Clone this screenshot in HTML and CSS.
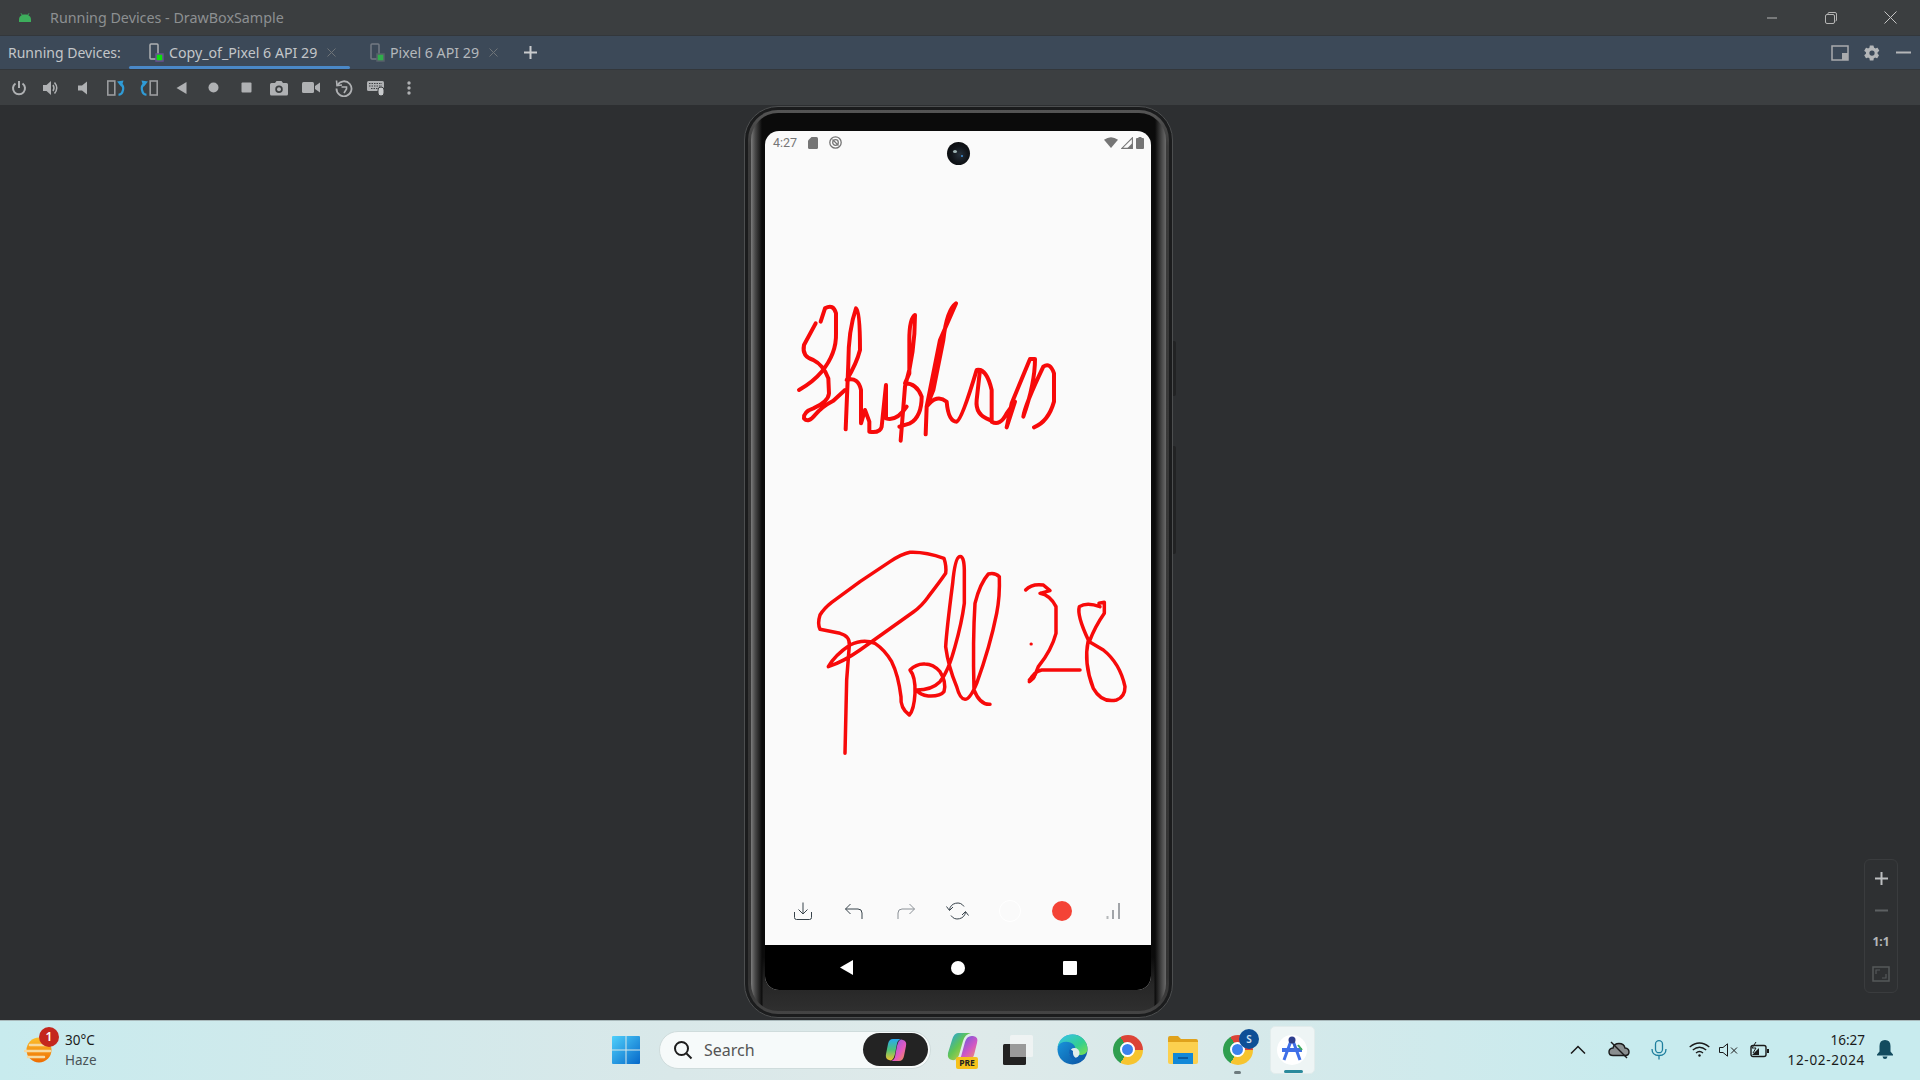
FILE: index.html
```html
<!DOCTYPE html>
<html lang="en">
<head>
<meta charset="utf-8">
<title>Running Devices - DrawBoxSample</title>
<link rel="stylesheet" href="styles.css">
</head>
<body>
<div class="titlebar">
  <svg class="android" viewBox="0 0 14 9" width="14" height="9"><path d="M1 9V6.500C1 3.500 3.500 1.500 7 1.500S13 3.500 13 6.500V9Z" fill="#3dae5c"/><path d="M3 .3 4.500 2.500M11 .3 9.500 2.500" stroke="#3dae5c" stroke-width="1"/></svg>
  <span class="title">Running Devices - DrawBoxSample</span>
  <div class="winctl">
    <svg width="12" height="12" viewBox="0 0 12 12"><path d="M1 6H11" stroke="#b5b5b5"/></svg>
    <svg width="14" height="14" viewBox="0 0 14 14" fill="none" stroke="#b5b5b5"><rect x="1.500" y="3.500" width="9" height="9" rx="1.500"/><path d="M4 3V2.500Q4 1.500 5 1.500H11Q12.500 1.500 12.500 3V9Q12.500 10 11.500 10"/></svg>
    <svg width="13" height="13" viewBox="0 0 13 13"><path d="M.5.500 12.500 12.500M12.500.500 .5 12.500" stroke="#c4c4c4"/></svg>
  </div>
</div>

<div class="tabbar">
  <span class="tablabel">Running Devices:</span>
  <div class="tab tab-active">
    <svg class="devicon" width="16" height="20" viewBox="0 0 16 20"><rect x="1" y="1" width="8" height="15" rx="1" fill="none" stroke="#afb1b3" stroke-width="1.500"/><rect x="7" y="11" width="7" height="7" fill="#0be00b" stroke="#6a4e92" stroke-width="1.500"/></svg>
    <span>Copy_of_Pixel 6 API 29</span>
    <svg class="tabx" width="9" height="9" viewBox="0 0 9 9"><path d="M.5.500 8.500 8.500M8.500.500 .5 8.500" stroke="#6f7478"/></svg>
  </div>
  <div class="tab tab-other">
    <svg class="devicon" width="16" height="20" viewBox="0 0 16 20"><rect x="1" y="1" width="8" height="15" rx="1" fill="none" stroke="#737a83" stroke-width="1.500"/><rect x="7" y="11" width="7" height="7" fill="#2fae4a" stroke="#57606a" stroke-width="1.500"/></svg>
    <span>Pixel 6 API 29</span>
    <svg class="tabx" width="9" height="9" viewBox="0 0 9 9"><path d="M.5.500 8.500 8.500M8.500.500 .5 8.500" stroke="#6f7478"/></svg>
  </div>
  <svg class="plus" width="13" height="13" viewBox="0 0 13 13"><path d="M6.500 0V13M0 6.500H13" stroke="#c9cbcd" stroke-width="2"/></svg>
  <div class="tabright">
    <svg width="18" height="16" viewBox="0 0 18 16"><rect x="1" y="1" width="16" height="14" fill="none" stroke="#a9abad" stroke-width="1.500"/><rect x="11" y="8" width="6" height="7" fill="#a9abad"/></svg>
    <svg class="gear" width="18" height="18" viewBox="0 0 24 24"><path fill="#b4b6b8" d="M19.400 13c.1-.3.100-.7.100-1s0-.7-.1-1l2.100-1.600c.2-.2.200-.4.100-.6l-2-3.500c-.1-.2-.4-.3-.6-.2l-2.500 1c-.5-.4-1.100-.7-1.700-1L14 2.400c0-.2-.2-.4-.5-.4h-4c-.2 0-.4.200-.5.400L8.600 5.100c-.6.300-1.200.6-1.700 1l-2.500-1c-.2-.1-.5 0-.6.200l-2 3.500c-.1.200-.1.400.1.600L4 11c0 .3-.1.700-.1 1s0 .7.100 1l-2.100 1.600c-.2.200-.2.400-.1.600l2 3.500c.1.200.4.300.6.200l2.500-1c.5.400 1.100.7 1.700 1l.4 2.700c0 .2.200.4.500.4h4c.2 0 .4-.2.500-.4l.4-2.700c.6-.3 1.200-.6 1.700-1l2.500 1c.2.100.5 0 .6-.2l2-3.500c.1-.2.100-.4-.1-.6ZM12 15.500a3.500 3.500 0 1 1 0-7 3.500 3.500 0 0 1 0 7Z"/></svg>
    <svg width="15" height="3" viewBox="0 0 15 3"><path d="M0 1.500H15" stroke="#b4b6b8" stroke-width="2"/></svg>
  </div>
</div>

<div class="toolbar">
  <div class="tool"><svg width="16" height="16" viewBox="0 0 16 16" fill="none" stroke="#afb1b3" stroke-width="2"><path d="M8 1V8"/><path d="M4.500 3.500A6 6 0 1 0 11.500 3.500"/></svg></div>
  <div class="tool"><svg width="18" height="16" viewBox="0 0 18 16"><path fill="#afb1b3" d="M1 5H4.500L9 1V15L4.500 11H1Z"/><path fill="none" stroke="#afb1b3" stroke-width="1.500" d="M11 5Q13 8 11 11M12.500 2.500Q17 8 12.500 13.500"/></svg></div>
  <div class="tool"><svg width="14" height="14" viewBox="0 0 14 14"><path fill="#afb1b3" d="M1 4.500H5L10 .5V13.500L5 9.500H1Z"/></svg></div>
  <div class="tool"><svg width="19" height="16" viewBox="0 0 19 16" fill="none"><rect x=".8" y="1" width="7" height="14" stroke="#9a9c9e" stroke-width="1.600"/><path d="M13 3.500Q17 5 16 10T11.500 14.500" stroke="#2f9bd6" stroke-width="2.200"/><path d="M16.500 .5 10 1.500 14.500 7Z" fill="#2f9bd6"/></svg></div>
  <div class="tool"><svg width="19" height="16" viewBox="0 0 19 16" fill="none"><rect x="11.200" y="1" width="7" height="14" stroke="#9a9c9e" stroke-width="1.600"/><path d="M6 3.500Q2 5 3 10T7.500 14.500" stroke="#2f9bd6" stroke-width="2.200"/><path d="M2.500 .5 9 1.500 4.500 7Z" fill="#2f9bd6"/></svg></div>
  <div class="tool"><svg width="11" height="12" viewBox="0 0 11 12"><path fill="#afb1b3" d="M10.500 0V12L.5 6Z"/></svg></div>
  <div class="tool"><svg width="11" height="11" viewBox="0 0 11 11"><circle cx="5.500" cy="5.500" r="5" fill="#afb1b3"/></svg></div>
  <div class="tool"><svg width="11" height="11" viewBox="0 0 11 11"><rect x=".5" y=".5" width="10" height="10" rx="1" fill="#afb1b3"/></svg></div>
  <div class="tool"><svg width="18" height="16" viewBox="0 0 18 16"><path fill="#afb1b3" fill-rule="evenodd" d="M1.500 3H5L6.500 1H11.500L13 3H16.500Q18 3 18 4.500V14Q18 15.500 16.500 15.500H1.500Q0 15.500 0 14V4.500Q0 3 1.500 3ZM9 5.500A3.700 3.700 0 1 0 9 13 3.700 3.700 0 0 0 9 5.500Z"/><circle cx="9" cy="9.300" r="2" fill="#afb1b3"/></svg></div>
  <div class="tool"><svg width="18" height="13" viewBox="0 0 18 13"><rect y="1" width="12" height="11" rx="1.500" fill="#afb1b3"/><path fill="#afb1b3" d="M13 5 18 1.500V11.500L13 8Z"/></svg></div>
  <div class="tool"><svg width="18" height="18" viewBox="0 0 18 18" fill="none" stroke="#afb1b3" stroke-width="1.800"><path d="M2.500 6A7.500 7.500 0 1 1 1.500 9.500"/><path d="M1.500 1.500 2 6.500 7 6" stroke-width="1.600"/><path d="M6.500 8H11.500V10L9 14" stroke-width="1.600"/></svg></div>
  <div class="tool"><svg width="18" height="16" viewBox="0 0 18 16"><rect y="1" width="17" height="10" rx="1.500" fill="#afb1b3"/><path d="M2 3.500H15M2 6H15M4 8.500H12" stroke="#3c3f41" stroke-dasharray="1.500 1"/><rect x="11" y="7" width="6" height="9" rx="3" fill="#c8cacc" stroke="#3c3f41"/></svg></div>
  <div class="tool"><svg width="4" height="14" viewBox="0 0 4 14" fill="#afb1b3"><circle cx="2" cy="2" r="1.700"/><circle cx="2" cy="7" r="1.700"/><circle cx="2" cy="12" r="1.700"/></svg></div>
</div>

<main class="stage">
  <div class="phone">
    <span class="sidekey sidekey-a"></span>
    <span class="sidekey sidekey-b"></span>
    <div class="rim">
      <div class="bezel">
        <div class="screen">
          <div class="statusbar">
            <span class="clock">4:27</span>
            <svg width="10" height="12" viewBox="0 0 10 12"><path fill="#757575" d="M3.500 0H8.500Q10 0 10 1.500V10.500Q10 12 8.500 12H1.500Q0 12 0 10.500V3.500Z"/></svg>
            <svg width="13" height="13" viewBox="0 0 13 13" fill="none" stroke="#757575" stroke-width="1.300"><circle cx="6.500" cy="6.500" r="5.700"/><circle cx="6.500" cy="6.500" r="2.800"/><path d="M3.500 3.500 9.500 9.500"/></svg>
            <div class="status-right">
              <svg width="14" height="11" viewBox="0 0 14 11"><path fill="#757575" d="M0 2.800Q7 -2.500 14 2.800L7 11Z"/></svg>
              <svg width="12" height="12" viewBox="0 0 12 12"><path d="M11.400 .8V11.400H.8Z" fill="none" stroke="#757575" stroke-width="1.100"/><path d="M6 11.500 11.500 6V11.500Z" fill="#757575"/></svg>
              <svg width="8" height="12" viewBox="0 0 8 12"><path fill="#757575" d="M2.500 0H5.500V1H7Q8 1 8 2V11Q8 12 7 12H1Q0 12 0 11V2Q0 1 1 1H2.500Z"/></svg>
            </div>
          </div>
          <span class="camera"><span class="glint glint-a"></span><span class="glint glint-b"></span></span>
          <div class="canvas">
            <svg class="ink" viewBox="765 156 386 721" fill="none" stroke="#f70a0a" stroke-linejoin="round" stroke-linecap="round">
              <g transform="translate(780 290) scale(.33333)" stroke-width="12">
                <path d="M107 100 72 165Q65 200 100 210 130 225 145 265L147 310Q145 335 100 355 70 365 72 385 85 400 105 375 125 350 160 332L195 300"/>
                <path d="M57 300Q100 275 125 245 170 190 168 130V70Q160 40 135 55L122 95"/>
                <path d="M197 418 205 220Q205 120 228 55 240 60 240 180 230 220 200 270 235 260 243 300V400L255 360 268 395V425Q300 430 305 410L318 285V385Q350 395 380 350"/>
                <path d="M362 452 375 290Q405 190 405 75 388 85 388 150V250L375 280Q410 280 425 320 425 380 390 400L358 410"/>
                <path d="M437 433 440 350 480 150 528 40Q500 60 490 150L460 300 440 350Q470 310 500 335 505 395 530 395 545 390 590 240 620 235 635 300V395Q660 410 680 370L705 335 680 412 695 340 750 207H765Q765 280 730 380 735 345 790 230 810 215 822 250V335Q805 395 762 412"/>
                <path d="M600 240 590 330Q585 375 630 390"/>
              </g>
              <g transform="translate(800 540) scale(.33333)" stroke-width="10.500">
                <path d="M135 640 140 420 148 315Q150 288 120 280 90 274 60 268 52 250 60 225 72 205 95 187L180 125 270 65Q305 42 330 37 375 35 432 55 440 80 437 100 420 125 385 170 365 198 340 216L180 330Q130 365 85 380 105 345 150 315 190 295 225 310 255 330 275 365 295 405 303 470 300 505 328 525 342 510 345 460 347 410 330 390 350 370 375 372 400 372 420 395 440 425 432 455 420 470 385 468 360 465 350 450 395 450 420 425 445 395 465 320 485 250 493 190V90Q492 45 478 50 465 55 458 130 440 270 437 320 445 380 470 440 480 478 495 478 510 478 530 430 570 320 590 220 600 170 598 110 585 97 565 102 540 130 525 190 518 300 522 450 540 495 570 493"/>
                <path d="M677 150Q695 130 730 135L750 152 720 160Q750 165 768 200V280Q755 330 715 380L705 405Q695 420 688 425 700 395 725 390H840"/>
                <path d="M900 200Q860 185 838 200 830 225 865 300 850 370 880 445 905 490 950 480 975 470 975 440 960 370 910 330L868 305Q885 260 913 220V187L897 190"/>
                <path d="M690 420 700 412" stroke-width="14"/>
                <path d="M693 312H694" stroke-width="9"/>
              </g>
            </svg>
          </div>
          <div class="appbar">
            <div class="appbtn"><svg width="18" height="18" viewBox="0 0 18 18" fill="none" stroke="#37424a" stroke-width="1"><path d="M9 .5V12M4.500 7.500 9 12 13.500 7.500"/><path d="M.5 10V15.500Q.5 17.500 2.500 17.500H15.500Q17.500 17.500 17.500 15.500V10"/></svg></div>
            <div class="appbtn"><svg width="18" height="16" viewBox="0 0 18 16" fill="none" stroke="#37424a" stroke-width="1"><path d="M5.500 1 .5 6 5.500 11M.5 6H13Q17 6 17 10V16" /></svg></div>
            <div class="appbtn"><svg width="18" height="16" viewBox="0 0 18 16" fill="none" stroke="#8a9096" stroke-width="1"><path d="M12.500 1 17.500 6 12.500 11M17.500 6H5Q1 6 1 10V16"/></svg></div>
            <div class="appbtn"><svg width="23" height="20" viewBox="0 0 23 20" fill="none" stroke="#37424a" stroke-width="1"><path d="M3.500 9A8 8 0 0 1 18 5.500M19.500 11A8 8 0 0 1 5 14.500"/><path d="M.5 5.500 3.500 9.500 7 6M22.500 14.500 19.500 10.500 16 14"/></svg></div>
            <div class="appbtn"><span class="swatch swatch-white"></span></div>
            <div class="appbtn"><span class="swatch swatch-red"></span></div>
            <div class="appbtn"><svg width="14" height="16" viewBox="0 0 14 16"><path d="M1.500 16V13M7 16V7M13 16V0" stroke-width="1" stroke="#4a5158"/><path d="M1.500 16V13" stroke="#b5b8ba" stroke-width="2"/></svg></div>
          </div>
          <div class="navbar">
            <svg width="13" height="15" viewBox="0 0 13 15"><path fill="#fff" d="M13 0V15L0 7.500Z"/></svg>
            <svg width="14" height="14" viewBox="0 0 14 14"><circle cx="7" cy="7" r="7" fill="#fff"/></svg>
            <svg width="14" height="14" viewBox="0 0 14 14"><rect width="14" height="14" rx="1" fill="#fff"/></svg>
          </div>
        </div>
      </div>
    </div>
  </div>

  <div class="zoompanel">
    <svg width="13" height="13" viewBox="0 0 13 13"><path d="M6.500 0V13M0 6.500H13" stroke="#bcbec0" stroke-width="2"/></svg>
    <svg width="13" height="3" viewBox="0 0 13 3"><path d="M0 1.500H13" stroke="#5d6062" stroke-width="2"/></svg>
    <span class="onetoone">1:1</span>
    <svg width="18" height="16" viewBox="0 0 18 16" fill="none"><rect x="1" y="1" width="16" height="14" stroke="#55585a" stroke-width="1.500"/><path d="M4 8V4H8M14 8V12H10" stroke="#55585a" stroke-width="1.200"/></svg>
  </div>
</main>

<footer class="taskbar">
  <div class="tb-left">
    <div class="weather-icon">
      <svg width="30" height="30" viewBox="0 0 30 30"><defs><linearGradient id="sun" x1="0" y1="0" x2="0" y2="1"><stop offset="0" stop-color="#fbc02d"/><stop offset="1" stop-color="#ef6c00"/></linearGradient></defs><circle cx="15" cy="15" r="12.500" fill="url(#sun)"/><path d="M6 10H22M1 16H26M4 22H20" stroke="#f6d9a0" stroke-width="2.500" stroke-linecap="round"/></svg>
      <span class="badge">1</span>
    </div>
    <div class="weather-text"><span class="temp">30°C</span><span class="haze">Haze</span></div>
  </div>

  <div class="tb-center">
    <svg class="winlogo" width="28" height="28" viewBox="0 0 28 28"><defs><linearGradient id="win" x1="0" y1="0" x2="1" y2="1"><stop offset="0" stop-color="#4fd0fb"/><stop offset="1" stop-color="#0668c9"/></linearGradient></defs><path fill="url(#win)" d="M0 1Q0 0 1 0H13.500V13.500H0ZM14.500 0H27Q28 0 28 1V13.500H14.500ZM0 14.500H13.500V28H1Q0 28 0 27ZM14.500 14.500H28V27Q28 28 27 28H14.500Z"/></svg>
    <div class="search">
      <svg width="20" height="20" viewBox="0 0 20 20" fill="none" stroke="#1c1c1c" stroke-width="2"><circle cx="8.500" cy="8.500" r="6.500"/><path d="M13.500 13.500 18.500 18.500"/></svg>
      <span class="search-text">Search</span>
      <div class="copilot-pill">
        <svg width="22" height="24" viewBox="0 0 22 24"><defs><linearGradient id="cpa" x1="0" y1="0" x2="0" y2="1"><stop offset="0" stop-color="#2aa9f2"/><stop offset=".5" stop-color="#4cc27a"/><stop offset="1" stop-color="#f2c22e"/></linearGradient><linearGradient id="cpb" x1="0" y1="0" x2="1" y2="1"><stop offset="0" stop-color="#7a5cf0"/><stop offset=".6" stop-color="#e45ac0"/><stop offset="1" stop-color="#f59a3c"/></linearGradient></defs><path fill="url(#cpa)" d="M8 1H16Q12 2 11.500 8L10 16Q8 24 4 22 0 21 1 16L3 6Q4 1 8 1Z"/><path fill="url(#cpb)" d="M14 23H6Q10 22 10.500 16L12 8Q14 0 18 2 22 3 21 8L19 18Q18 23 14 23Z"/></svg>
      </div>
    </div>
    <div class="tb-app">
      <svg width="32" height="36" viewBox="0 0 32 36"><defs><linearGradient id="cpc" x1="0" y1="0" x2="1" y2="1"><stop offset="0" stop-color="#1f9df0"/><stop offset=".45" stop-color="#62c554"/><stop offset="1" stop-color="#f4d03f"/></linearGradient><linearGradient id="cpd" x1="0" y1="0" x2="1" y2="1"><stop offset="0" stop-color="#3d59e8"/><stop offset=".6" stop-color="#d257c4"/><stop offset="1" stop-color="#f5a04d"/></linearGradient></defs><path fill="url(#cpc)" d="M11 1H24Q18 2 16 9L12 23Q10 29 5 28 0 27 1 21L5 8Q7 1 11 1Z"/><path fill="url(#cpd)" d="M20 29H8Q14 28 15 21L18 10Q20 3 26 4 32 5 30 11L27 23Q25 29 20 29Z"/></svg>
      <span class="pre">PRE</span>
    </div>
    <div class="tb-app">
      <svg width="30" height="30" viewBox="0 0 30 30"><rect x="0" y="9" width="23" height="21" rx="1.500" fill="#222"/><rect x="7" y="0" width="23" height="22" rx="1.500" fill="#f4f6f6" fill-opacity=".75"/><rect x="7" y="9" width="16" height="13" fill="#9a9a9a"/></svg>
    </div>
    <div class="tb-app">
      <svg width="31" height="31" viewBox="0 0 31 31"><defs><linearGradient id="edgeA" x1="0" y1="0" x2="1" y2="1"><stop offset="0" stop-color="#35c1f1"/><stop offset=".6" stop-color="#34cf90"/><stop offset="1" stop-color="#7fe04a"/></linearGradient><linearGradient id="edgeB" x1="0" y1="0" x2="1" y2="1"><stop offset="0" stop-color="#1b9de2"/><stop offset="1" stop-color="#0a4f9e"/></linearGradient></defs><circle cx="15.500" cy="15.500" r="15" fill="url(#edgeB)"/><path fill="url(#edgeA)" d="M.5 13C2 5 8 .5 15.500 .5 24 .5 30.500 7 30.500 15 30.500 20 26 21.500 21 21 17 20.500 20 15 17 11 12 6 3 7 .5 13Z"/><circle cx="17.500" cy="19" r="5" fill="#e0ecec"/><path fill="#0f62b5" d="M13 15C10 20 14 27 22 27 25 27 27 26 28 24 22 27.500 15 24 16 17Z"/></svg>
    </div>
    <div class="tb-app"><span class="chrome"><span class="chrome-eye"></span></span></div>
    <div class="tb-app">
      <svg width="30" height="28" viewBox="0 0 30 28"><path fill="#e0a21c" d="M0 2Q0 0 2 0H10L13 3H28Q30 3 30 5V8H0Z"/><path fill="#fcd04f" d="M0 6H30V26Q30 28 28 28H2Q0 28 0 26Z"/><rect x="5" y="17" width="20" height="11" fill="#1288d8"/><rect x="10" y="21" width="10" height="2" fill="#0a5a9e"/></svg>
    </div>
    <div class="tb-app running">
      <span class="chrome"><span class="chrome-eye"></span></span>
      <span class="profile">S</span>
      <span class="dot"></span>
    </div>
    <div class="tb-tile">
      <span class="as-circle">
        <svg width="26" height="30" viewBox="0 0 26 30" fill="none"><path d="M13 3 5 25M13 3 21 25" stroke="#3f6fe8" stroke-width="3"/><circle cx="13" cy="5" r="3.500" fill="#2f3f8f"/><path d="M3 15H23" stroke="#3f6fe8" stroke-width="4"/><path d="M19 10 23 15" stroke="#3dae5c" stroke-width="2"/></svg>
      </span>
      <span class="tile-bar"></span>
    </div>
  </div>

  <div class="tb-right">
    <svg width="16" height="9" viewBox="0 0 16 9" fill="none" stroke="#1a1a1a" stroke-width="1.500"><path d="M1 8.500 8 1.500 15 8.500"/></svg>
    <svg class="tray-cloud" width="22" height="18" viewBox="0 0 22 18"><path d="M5 14.500H17Q21 14.500 21 11T17 7Q16 2.500 11 2.500T5 7Q1 7.500 1 11T5 14.500Z" fill="#8a8f90" stroke="#1a1a1a" stroke-width="1.400"/><path d="M3 1 19 17" stroke="#1a1a1a" stroke-width="1.400"/></svg>
    <svg class="tray-mic" width="16" height="20" viewBox="0 0 16 20" fill="none" stroke="#1f7f9e" stroke-width="1.300"><rect x="4.500" y=".7" width="7" height="12" rx="3.500"/><path d="M1 9Q1 15.500 8 15.500T15 9M8 15.500V19.500"/></svg>
    <svg class="tray-wifi" width="21" height="15" viewBox="0 0 21 15" fill="none" stroke="#1a1a1a" stroke-width="1.300"><path d="M.7 5Q10.500 -3 20.300 5M3.800 8Q10.500 2.500 17.200 8M7 11Q10.500 8 14 11"/><circle cx="10.500" cy="13.500" r="1.200" fill="#1a1a1a" stroke="none"/></svg>
    <svg class="tray-vol" width="20" height="14" viewBox="0 0 20 14" fill="none" stroke="#1a1a1a" stroke-width="1"><path d="M.5 4.500H4L8.500 .8V13.200L4 9.500H.5Z"/><path d="M12 4.500 18 10.500M18 4.500 12 10.500"/></svg>
    <svg class="tray-bat" width="20" height="16" viewBox="0 0 20 16"><rect x="1" y="3.500" width="15" height="11" rx="2" fill="none" stroke="#1a1a1a" stroke-width="1.400"/><rect x="17" y="7" width="2" height="4" fill="#1a1a1a"/><path d="M2 13 9 6V13Z" fill="#1a1a1a"/><path d="M6 0 2 6H6L3 11" fill="none" stroke="#1a1a1a"/></svg>
    <div class="clockbox"><span>16:27</span><span class="date">12-02-2024</span></div>
    <svg width="16" height="19" viewBox="0 0 16 19"><path fill="#134b5e" d="M8 0Q13.500 0 13.500 6V11.500L16 14.500V15.500H0V14.500L2.500 11.500V6Q2.500 0 8 0ZM5.500 16.500H10.500Q10 19 8 19T5.500 16.500Z"/></svg>
  </div>
</footer>
</body>
</html>
```

FILE: styles.css
```css
* { box-sizing: border-box; }
html, body { margin: 0; height: 100%; }
body {
  width: 1920px;
  height: 1080px;
  overflow: hidden;
  display: flex;
  flex-direction: column;
  font-family: "Noto Sans", "Open Sans", sans-serif;
  background: #2d2f31;
}
svg { display: block; flex: none; }

/* IDE chrome */
.titlebar {
  height: 35px;
  flex: none;
  display: flex;
  align-items: center;
  padding-left: 18px;
  background: #3b3e40;
  color: #8d9092;
  font-size: 14.300px;
}
.title { margin-left: 18px; }
.winctl {
  margin-left: auto;
  display: flex;
  align-items: center;
  gap: 46px;
  padding-right: 23px;
}
.tabbar {
  height: 35px;
  flex: none;
  display: flex;
  align-items: center;
  padding-left: 8px;
  background: #3c4958;
  border-top: 1px solid #33373b;
  border-bottom: 1px solid #33373b;
  color: #c3c6c9;
  font-size: 14px;
}
.tablabel { width: 121px; white-space: nowrap; }
.tab {
  position: relative;
  display: flex;
  align-items: center;
  height: 33px;
  white-space: nowrap;
  font-size: 14.200px;
}
.tab-active {
  width: 221px;
  padding-left: 20px;
}
.tab-active::after {
  content: "";
  position: absolute;
  left: 0;
  right: 0;
  bottom: 0;
  height: 3px;
  border-radius: 2px;
  background: #4a88c7;
}
.tab-other { width: 160px; padding-left: 20px; color: #b4b8bc; }
.devicon { margin-right: 4px; margin-top: 1px; }
.tabx { margin-left: 10px; }
.plus { margin-left: 14px; }
.tabright {
  margin-left: auto;
  display: flex;
  align-items: center;
  gap: 14px;
  padding-right: 9px;
}
.gear { margin-right: 1px; }
.toolbar {
  height: 35px;
  flex: none;
  display: flex;
  align-items: center;
  padding-left: 2.500px;
  background: #3c3f41;
}
.tool {
  width: 32.500px;
  display: flex;
  justify-content: center;
  align-items: center;
}

/* Device stage */
.stage {
  position: relative;
  flex: 1;
  min-height: 0;
  display: flex;
  align-items: center;
  justify-content: center;
  padding-right: 3px;
  background: #2d2f31;
}
.phone {
  position: relative;
  width: 429px;
  height: 912px;
  margin-bottom: 1px;
  padding: 3px;
  border: 1px solid #4c4e4f;
  border-radius: 34px;
  background: #1b1c1d;
}
.sidekey {
  position: absolute;
  right: -4px;
  width: 3px;
  background: #222324;
  border-radius: 0 2px 2px 0;
}
.sidekey-a { top: 234px; height: 55px; }
.sidekey-b { top: 339px; height: 108px; }
.rim {
  height: 100%;
  padding: 3px;
  border-radius: 30px;
  background: linear-gradient(#555, #3a3a3a 4%, #333 96%, #444);
}
.bezel {
  height: 100%;
  padding: 18px 15px 21px 14px;
  border-radius: 27px;
  background:
    linear-gradient(90deg, #7c7c7c 0, #4a4a4a 4px, #0b0b0b 11px, transparent 12px, transparent calc(100% - 12px), #0b0b0b calc(100% - 11px), #4a4a4a calc(100% - 4px), #6a6a6a 100%),
    linear-gradient(#0b0b0b 0, #0b0b0b 94%, #262626 97%, #2f2f2f 100%);
}
.screen {
  position: relative;
  height: 100%;
  display: flex;
  flex-direction: column;
  border-radius: 14px;
  overflow: hidden;
  background: #fafafa;
}
.statusbar {
  height: 25px;
  flex: none;
  display: flex;
  align-items: center;
  gap: 11px;
  padding: 0 7px 2px 8px;
  color: #757575;
  font-family: "Roboto", sans-serif;
  font-size: 12.500px;
}
.status-right {
  margin-left: auto;
  display: flex;
  align-items: center;
  gap: 3px;
}
.camera {
  position: absolute;
  top: 11px;
  left: 182px;
  width: 23px;
  height: 23px;
  border-radius: 50%;
  background: radial-gradient(circle at 55% 55%, #26303a 0, #11151a 45%, #050505 100%);
}
.glint {
  position: absolute;
  border-radius: 50%;
}
.glint-a { left: 6px; top: 8px; width: 4px; height: 3px; background: #9fb4b4; }
.glint-b { left: 14px; top: 13px; width: 2px; height: 2px; background: #3f8fd8; }
.canvas { flex: 1; min-height: 0; }
.ink { width: 100%; height: 100%; }
.appbar {
  height: 68px;
  flex: none;
  display: flex;
  justify-content: center;
  align-items: center;
}
.appbtn {
  width: 51.800px;
  display: flex;
  justify-content: center;
  align-items: center;
}
.swatch { display: block; border-radius: 50%; }
.swatch-white { width: 22px; height: 22px; border: 1px solid #fff; }
.swatch-red { width: 20px; height: 20px; background: #f44336; }
.navbar {
  height: 45px;
  flex: none;
  display: flex;
  justify-content: center;
  align-items: center;
  gap: 98px;
  background: #000;
}
.zoompanel {
  position: absolute;
  top: 754px;
  right: 22px;
  width: 34px;
  height: 134px;
  display: grid;
  grid-auto-rows: 32px;
  align-items: center;
  justify-items: center;
  padding-top: 2px;
  border: 1px solid #3a3c3e;
  border-radius: 6px;
  background: #2e3032;
}
.onetoone {
  color: #b4b6b8;
  font-size: 12px;
  font-weight: 700;
  line-height: 12px;
}

/* Taskbar */
.taskbar {
  height: 60px;
  flex: none;
  display: flex;
  align-items: center;
  padding-bottom: 2px;
  border-top: 1px solid #a9b9bb;
  background: linear-gradient(90deg, #c8ebee 0, #d9e8e9 35%, #dfeaea 50%, #d6e9ea 65%, #c8ebee 85%);
  color: #1b1b1b;
}
.tb-left {
  width: 612px;
  flex: none;
  display: flex;
  align-items: center;
  padding-left: 24px;
}
.weather-icon { position: relative; width: 30px; height: 30px; }
.badge {
  position: absolute;
  left: 15px;
  top: -8px;
  width: 20px;
  height: 20px;
  border-radius: 50%;
  background: #c4261d;
  color: #fff;
  text-align: center;
  font-size: 12px;
  font-weight: 600;
  line-height: 20px;
}
.weather-text {
  display: flex;
  flex-direction: column;
  margin-left: 11px;
  font-size: 13.500px;
  line-height: 20px;
}
.haze { color: #4a5458; }
.tb-center { display: flex; align-items: center; flex: none; }
.search {
  width: 272px;
  height: 38px;
  margin-left: 19px;
  margin-right: 4px;
  display: flex;
  align-items: center;
  padding: 0 2px 0 13px;
  border: 1px solid #cfdcdc;
  border-radius: 19px;
  background: #f6fafa;
}
.search-text { margin-left: 11px; color: #555; font-size: 16px; }
.copilot-pill {
  margin-left: auto;
  width: 65px;
  height: 33px;
  display: flex;
  align-items: center;
  justify-content: center;
  border-radius: 17px;
  background: #232323;
}
.tb-app {
  position: relative;
  width: 55px;
  height: 48px;
  display: flex;
  align-items: center;
  justify-content: center;
}
.pre {
  position: absolute;
  left: 21px;
  top: 31px;
  width: 22px;
  height: 12px;
  border-radius: 2px;
  background: #f6c21c;
  color: #222;
  text-align: center;
  font-size: 8.500px;
  font-weight: 700;
  line-height: 12px;
}
.chrome {
  display: flex;
  align-items: center;
  justify-content: center;
  width: 30px;
  height: 30px;
  border-radius: 50%;
  background: conic-gradient(from 0deg, #dc4437 0 90deg, #f6c42f 90deg 210deg, #2f9e4f 210deg 330deg, #dc4437 330deg);
}
.chrome-eye {
  display: block;
  width: 15px;
  height: 15px;
  border: 2px solid #fff;
  border-radius: 50%;
  background: #3b82ee;
}
.profile {
  position: absolute;
  left: 29px;
  top: 3px;
  width: 20px;
  height: 20px;
  border-radius: 50%;
  background: #0e4f96;
  color: #cfe0f2;
  text-align: center;
  font-size: 10px;
  font-weight: 600;
  line-height: 20px;
}
.dot {
  position: absolute;
  left: 24px;
  bottom: 0;
  width: 7px;
  height: 3px;
  border-radius: 2px;
  background: #6d7b7e;
}
.tb-tile {
  position: relative;
  width: 45px;
  height: 48px;
  margin-left: 4.500px;
  display: flex;
  align-items: center;
  justify-content: center;
  border-radius: 5px;
  background: #eef5f5;
  border: 1px solid #e2ecec;
}
.as-circle {
  display: flex;
  align-items: center;
  justify-content: center;
  width: 30px;
  height: 30px;
  border-radius: 50%;
  background: #fff;
}
.tile-bar {
  position: absolute;
  left: 13px;
  bottom: 0;
  width: 19px;
  height: 3px;
  border-radius: 2px;
  background: #2b8a9c;
}
.tb-right {
  margin-left: auto;
  display: flex;
  align-items: center;
  padding-right: 27px;
}
.tray-cloud { margin-left: 22px; }
.tray-mic { margin-left: 21px; }
.tray-wifi { margin-left: 22px; }
.tray-vol { margin-left: 9px; }
.tray-bat { margin-left: 11px; }
.clockbox {
  display: flex;
  flex-direction: column;
  align-items: flex-end;
  margin-left: 18px;
  margin-right: 12px;
  font-size: 13.500px;
  line-height: 20px;
}
.date { letter-spacing: .7px; }
```
